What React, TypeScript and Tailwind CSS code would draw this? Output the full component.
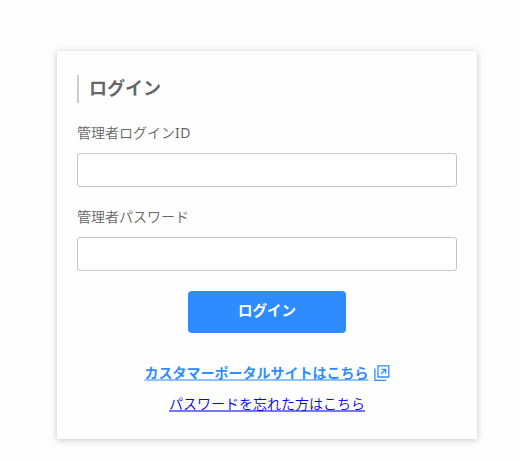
import type { ReactNode } from 'react';

interface FieldProps {
  id: string;
  type: string;
  children: ReactNode;
}

function Field({ id, type, children }: FieldProps) {
  return (
    <div className="flex flex-col">
      <label htmlFor={id} className="text-[14px] leading-[20px] font-[350] text-[#666]">
        {children}
      </label>
      <input
        id={id}
        type={type}
        className="mt-[10px] h-[34px] w-full rounded-[3px] border border-[#c3c3cd] bg-white px-2 outline-none"
      />
    </div>
  );
}

function ExternalIcon() {
  return (
    <svg width="16" height="16" viewBox="0 0 16 16" fill="none" stroke="#2e8cff" strokeWidth="1.3">
      <path d="M4 .8h10.8v11.2H4z" />
      <path d="M.9 3.5v11.8H12" />
      <path d="M7 9l4.3-4.3M7.6 4.3h4.1v4.1" />
    </svg>
  );
}

export default function App() {
  return (
    <div className="min-h-[461px] bg-[#fdfdfd] pt-[51px] pl-[57px] font-['Noto_Sans','Noto_Sans_CJK_JP',sans-serif]">
      <form
        onSubmit={(e) => e.preventDefault()}
        className="flex h-[388px] w-[420px] flex-col bg-[#fefefe] px-5 pt-[24px] shadow-[0_1px_6px_rgba(0,0,0,0.22)]"
      >
        <h1 className="h-7 border-l-2 border-[#ccc] pl-[10px] text-[18px] leading-[26px] font-bold text-[#666]">
          ログイン
        </h1>
        <div className="mt-5 flex flex-col gap-5">
          <Field id="admin-id" type="text">
            管理者ログイン<span className="font-normal tracking-[0.5px]">ID</span>
          </Field>
          <Field id="admin-password" type="password">管理者パスワード</Field>
        </div>
        <button
          type="submit"
          className="mt-[19.6px] h-[42px] w-[158px] self-center rounded-[4px] bg-[#2e8cff] pb-px text-[14.5px] font-bold text-white"
        >
          ログイン
        </button>
        <div className="mt-[30.4px] flex flex-col items-center gap-[11px] text-[14px] leading-[20px] whitespace-nowrap">
          <a href="#portal" className="flex items-center gap-[5px] font-bold text-[#2e8cff]">
            <span className="underline decoration-[#8fc2ff] decoration-2 underline-offset-[1px] [text-decoration-skip-ink:none]">
              カスタマーポータルサイトはこちら
            </span>
            <ExternalIcon />
          </a>
          <a
            href="#forgot"
            className="font-[350] text-[#0000ee] underline decoration-[#7777f6] decoration-2 underline-offset-[1px] [text-decoration-skip-ink:none]"
          >
            パスワードを忘れた方はこちら
          </a>
        </div>
      </form>
    </div>
  );
}
